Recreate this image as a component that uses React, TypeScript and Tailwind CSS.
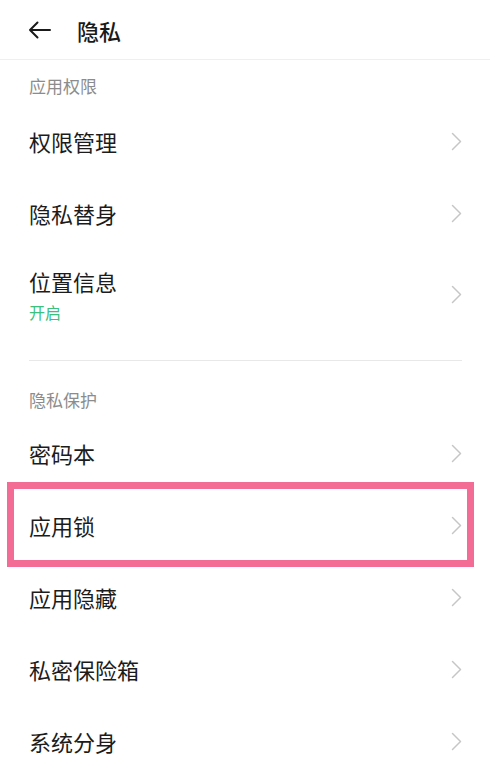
import { ReactNode } from "react";

const font = { fontFamily: '"Noto Sans CJK SC", "Noto Sans", sans-serif' };

const Chevron = () => (
  <svg width="11" height="19" viewBox="0 0 11 19" fill="none" className="shrink-0">
    <polyline points="1.5,1.5 9.5,9.5 1.5,17.5" stroke="#c6c6c6" strokeWidth="1.5" strokeLinecap="round" strokeLinejoin="round" />
  </svg>
);

const SectionLabel = ({ children, className = "" }: { children: ReactNode; className?: string }) => (
  <div className={`px-[29px] text-[17px] leading-[20px] text-[#8c8c8c] ${className}`}>{children}</div>
);

const Row = ({ title, sub }: { title: string; sub?: string }) => (
  <div className={`flex items-center justify-between pl-[29px] pr-[28px] ${sub ? "pt-[17px] pb-[18px]" : "h-[72px]"}`}>
    <div className="flex flex-col">
      <span className="text-[22px] leading-[30px] text-[#1c1c1c]">{title}</span>
      {sub && <span className="mt-[5px] text-[16px] leading-[22px] text-[#3cc07e]">{sub}</span>}
    </div>
    <Chevron />
  </div>
);

export default function App() {
  return (
    <div className="w-[490px] h-[778px] overflow-hidden bg-white" style={font}>
      {/* Header */}
      <div className="h-[60px] flex items-center px-[28px] border-b border-[#efefef]">
        <svg width="23" height="18" viewBox="0 0 23 18" fill="none">
          <path d="M22 9H2M9.5 1.5L2 9l7.5 7.5" stroke="#1a1a1a" strokeWidth="2" strokeLinecap="round" strokeLinejoin="round" />
        </svg>
        <span className="ml-[26px] text-[22px] leading-[30px] font-medium text-[#1a1a1a]">隐私</span>
      </div>

      <SectionLabel className="pt-[16px] pb-[9px]">应用权限</SectionLabel>
      <Row title="权限管理" />
      <Row title="隐私替身" />
      <Row title="位置信息" sub="开启" />

      <div className="ml-[29px] mr-[28px] mt-[19px] h-px bg-[#e8e8e8]" />

      <SectionLabel className="pt-[29px] pb-[7px]">隐私保护</SectionLabel>
      <Row title="密码本" />
      <div className="relative">
        <Row title="应用锁" />
        <span className="pointer-events-none absolute left-[7px] right-[16px] top-[-7px] bottom-[-6px] border-[7px] border-[#f36c95]" />
      </div>
      <Row title="应用隐藏" />
      <Row title="私密保险箱" />
      <Row title="系统分身" />
    </div>
  );
}
